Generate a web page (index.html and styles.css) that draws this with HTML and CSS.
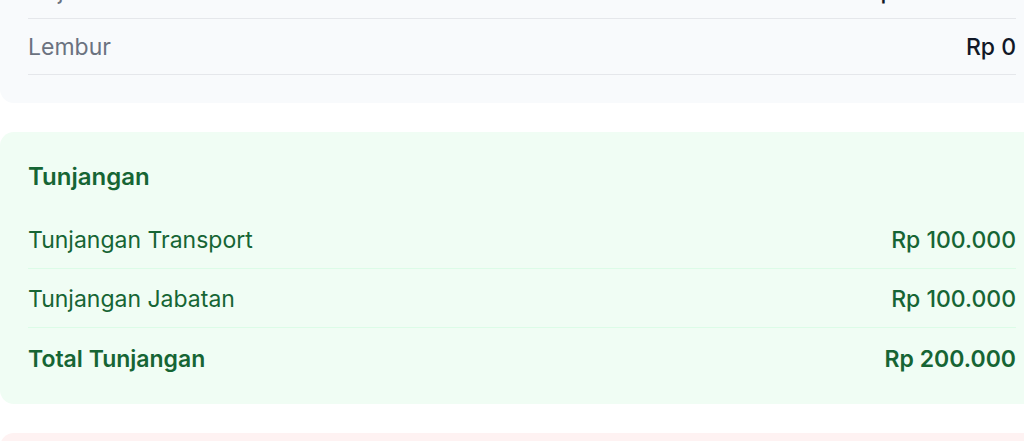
FILE: index.html
```html
<!DOCTYPE html>
<html lang="id">
<head>
    <meta charset="UTF-8">
    <meta name="viewport" content="width=device-width, initial-scale=1.0">
    <title>Slip Gaji</title>
    <link rel="stylesheet" href="styles.css">
</head>
<body>
    <div class="page">
        <div class="card card-base">
            <h2 class="card-title">Gaji</h2>
            <div class="row">
                <span class="label">Gaji Pokok</span>
                <span class="value">Rp 3.000.000</span>
            </div>
            <div class="row">
                <span class="label">Lembur</span>
                <span class="value">Rp 0</span>
            </div>
        </div>

        <div class="card card-plus">
            <h2 class="card-title">Tunjangan</h2>
            <div class="row">
                <span class="label">Tunjangan Transport</span>
                <span class="value">Rp 100.000</span>
            </div>
            <div class="row">
                <span class="label">Tunjangan Jabatan</span>
                <span class="value">Rp 100.000</span>
            </div>
            <div class="row row-total">
                <span class="label">Total Tunjangan</span>
                <span class="value">Rp 200.000</span>
            </div>
        </div>

        <div class="card card-minus">
            <h2 class="card-title">Potongan</h2>
            <div class="row">
                <span class="label">BPJS Kesehatan</span>
                <span class="value">Rp 0</span>
            </div>
        </div>
    </div>
</body>
</html>
```

FILE: styles.css
```css
body {
    font-family: 'Inter', 'Noto Sans', sans-serif;
    margin: 0;
    padding: 0;
    background: #ffffff;
    overflow: hidden;
}
.page {
    width: 1044px;
    margin-top: -115px;
}
.card {
    padding: 28px;
    border-radius: 14px;
    margin-bottom: 29px;
}
.card-title {
    margin: 0 0 16px;
    font-size: 24px;
    line-height: 34px;
    font-weight: 600;
}
.row {
    display: flex;
    justify-content: space-between;
    align-items: center;
    padding: 14px 0 12px;
    font-size: 23px;
    line-height: 32px;
    border-bottom: 1px solid;
}
.value {
    font-weight: 500;
}
.row-total {
    padding: 15px 0 1px;
    border-bottom: none;
    font-weight: 600;
}
.row-total .value {
    font-weight: 600;
}

.card-base { background: #f8fafc; }
.card-base .row { padding: 12px 0 11px; border-color: #e5e7eb; }
.card-base .label { color: #6b7280; }
.card-base .value { color: #111827; }

.card-plus { background: #f0fdf4; color: #166534; }
.card-plus .row { border-color: #dcfce7; }
.card-plus .row-total { border: none; }

.card-minus { background: #fef2f2; color: #991b1b; }
.card-minus .row { border-color: #fee2e2; }
```
